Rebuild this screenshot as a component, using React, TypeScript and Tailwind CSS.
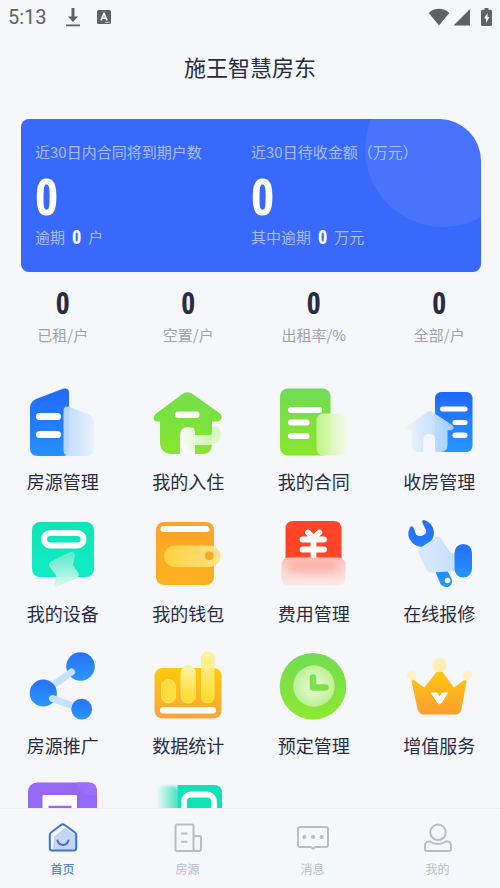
import type { ReactNode } from 'react';

const numberFont = "font-['Open_Sans_Condensed','Roboto_Condensed','Liberation_Sans',sans-serif] font-bold";

interface GradProps {
  id: string;
  from: string;
  to: string;
  fromOpacity?: number;
  toOpacity?: number;
  horizontal?: boolean;
}

function Grad({ id, from, to, fromOpacity = 1, toOpacity = 1, horizontal }: GradProps) {
  return (
    <linearGradient id={id} x1="0" y1="0" x2={horizontal ? '1' : '0'} y2={horizontal ? '0' : '1'}>
      <stop offset="0" stopColor={from} stopOpacity={fromOpacity} />
      <stop offset="1" stopColor={to} stopOpacity={toOpacity} />
    </linearGradient>
  );
}

function MenuIcon({ children }: { children: ReactNode }) {
  return (
    <svg viewBox="0 0 80 80" className="size-20" fill="none" aria-hidden="true">
      {children}
    </svg>
  );
}

const menu: { id: string; label?: string; icon: ReactNode }[] = [
  {
    id: 'estate',
    label: '房源管理',
    icon: (
      <>
        <defs>
          <Grad id="estate" from="#2068fb" to="#2390ff" />
          <Grad id="estateGlass" from="#b9d8fd" to="#e9f1fc" horizontal />
        </defs>
        <path d="M7 26q0-6 6-9L40 6.800q6-1.500 6 4V68q0 6-6 6H15q-8 0-8-8Z" fill="url(#estate)" />
        <rect x="13" y="31" width="25" height="7" rx="3.500" fill="#fff" />
        <rect x="13" y="49" width="25" height="7" rx="3.500" fill="#fff" />
        <path d="M40.500 29q0-6 6-4L66 32.500q5 2 5 8V66q0 8-8 8H47q-6.500 0-6.500-6Z" fill="url(#estateGlass)" fillOpacity=".95" />
      </>
    ),
  },
  {
    id: 'stay',
    label: '我的入住',
    icon: (
      <>
        <defs>
          <Grad id="stay" from="#72df4c" to="#8ae52f" />
          <Grad id="stayGlass" from="#f4fdea" to="#d3f6b8" toOpacity={0.85} horizontal />
        </defs>
        <path d="M34.500 12q5-3.500 10 0L72 31.500q3 2.500 1 6-1.500 2-4 2h-5V63q-1 9-9 9H24q-11 0-12-11V39.500H9q-3 0-3.500-3-.2-2.500 2-4.500Z" fill="url(#stay)" />
        <rect x="27" y="29.500" width="24.500" height="6.500" rx="3" fill="#fff" />
        <path d="M32 72.500V54q0-9 8-9 7 0 7 8v19.500Z" fill="#f8faf8" />
        <path d="M34 54.500 43 46q3-1.500 3.500 2v5H62q2 0 2-3v-5q7-2.500 8.500 5.500Q73.500 62 62 63H47v5q-1 2-3 .5L34 58.500q-2-2 0-4Z" fill="url(#stayGlass)" />
      </>
    ),
  },
  {
    id: 'contract',
    label: '我的合同',
    icon: (
      <>
        <defs>
          <Grad id="contract" from="#70db55" to="#8be52b" />
          <Grad id="contractGlass" from="#c5f58d" to="#f2fce9" horizontal />
        </defs>
        <rect x="6" y="6.500" width="50.500" height="67" rx="8" fill="url(#contract)" />
        <rect x="14" y="25" width="34" height="6" rx="3" fill="#fff" />
        <rect x="14" y="37.500" width="21.500" height="6" rx="3" fill="#fff" />
        <rect x="14" y="51" width="21.500" height="6" rx="3" fill="#fff" />
        <rect x="42.500" y="31.500" width="30.500" height="42" rx="7" fill="url(#contractGlass)" fillOpacity=".95" />
      </>
    ),
  },
  {
    id: 'collect',
    label: '收房管理',
    icon: (
      <>
        <defs>
          <Grad id="collect" from="#2067fb" to="#2797ff" />
          <Grad id="collectGlass" from="#edf4fd" to="#a6d3fc" horizontal />
        </defs>
        <rect x="36" y="10" width="37.500" height="60" rx="6" fill="url(#collect)" />
        <rect x="41" y="24.500" width="27.500" height="5" rx="2.500" fill="#fff" />
        <rect x="53.500" y="38" width="15" height="5" rx="2.500" fill="#fff" />
        <rect x="53.500" y="50.500" width="15" height="5.500" rx="2.700" fill="#fff" />
        <path d="M28.500 30q2.500-1.800 5 0L53 43q2.500 1.800 1 4-1 1.300-3 1.300h-2.500V63q0 7-7 7H36V57q0-5-5.800-5T24.300 57v13H20q-7.300 0-7.300-7V48.300H10q-3.500-.3-2.500-3.500Z" fill="url(#collectGlass)" fillOpacity=".95" />
      </>
    ),
  },
  {
    id: 'device',
    label: '我的设备',
    icon: (
      <>
        <defs>
          <Grad id="device" from="#10e4b5" to="#0fedc4" />
          <Grad id="deviceGlass" from="#5fe9c8" to="#d9faf1" />
        </defs>
        <rect x="9" y="8" width="62" height="55" rx="8" fill="url(#device)" />
        <rect x="21" y="19" width="39.500" height="12.500" rx="6.200" stroke="#fff" strokeWidth="6" />
        <path d="M47 38.800q4-1.600 4.500 2.500L49.500 51l5.500 8q1.500 3-1.500 4.500L32.500 72.500q-1.500.5-1-1L33.700 62l-7-9.500q-1.700-3 1.300-4.700Z" fill="url(#deviceGlass)" fillOpacity=".95" stroke="#a5f5df" strokeOpacity=".6" strokeWidth=".8" />
      </>
    ),
  },
  {
    id: 'wallet',
    label: '我的钱包',
    icon: (
      <>
        <defs>
          <Grad id="wallet" from="#fba32b" to="#ffb11d" />
          <Grad id="walletGlass" from="#ffd43a" to="#ffe38c" horizontal />
        </defs>
        <rect x="8" y="8" width="58" height="63" rx="8" fill="url(#wallet)" />
        <rect x="12.500" y="12" width="49" height="6" rx="3" fill="#fff" />
        <rect x="16" y="31.500" width="56.500" height="21.500" rx="10.700" fill="url(#walletGlass)" fillOpacity=".95" />
        <circle cx="61.300" cy="41.700" r="4.500" fill="#fdaa23" />
      </>
    ),
  },
  {
    id: 'fee',
    label: '费用管理',
    icon: (
      <>
        <defs>
          <Grad id="feeGlass" from="#fdc3bb" to="#fbe9e8" />
          <filter id="feeBlur" x="-20%" y="-60%" width="140%" height="220%">
            <feGaussianBlur stdDeviation="4" />
          </filter>
        </defs>
        <path d="M11.500 45V15q0-8 8-8h40q8 0 8 8v30Z" fill="#ff4428" />
        <path d="m34 18.500 5.500 5.500 5.800-5.500M28.500 25.500h21.500M28.500 35.500h21.500M39.500 25v20" stroke="#fff" strokeWidth="5.800" strokeLinecap="round" strokeLinejoin="round" />
        <rect x="7.500" y="43.500" width="64" height="28" rx="7" fill="url(#feeGlass)" />
        <rect x="15" y="47" width="49" height="11" rx="5" fill="#fc9f91" fillOpacity=".65" filter="url(#feeBlur)" />
      </>
    ),
  },
  {
    id: 'repair',
    label: '在线报修',
    icon: (
      <>
        <defs>
          <Grad id="repair" from="#236efa" to="#2595fd" />
          <Grad id="repairGlass" from="#dbeafd" to="#c4dffd" horizontal />
        </defs>
        <path d="M11 13.500q2-2.500 3.800.5L17 20.500q3 2.500 6.500 1 4.500-2 3.500-5.500L23.500 9q-1-3.500 2.500-2.800 8 3.300 9 11.800 0 5-2.500 9l20 37.500q2 5.500-2.500 8-5 2-8.500-2.500L26 33q-8 .5-12.500-4Q6.500 22 11 13.500Z" fill="url(#repair)" />
        <circle cx="48.500" cy="66.500" r="2.800" fill="#f4f7fc" />
        <path d="M20 34.500 38 23q2-1.200 3.500 1L51 38q1.500 1.500 4 1.500l4 .5v17l-27 1.500q-3.500 0-5-3.500l-8-17q-.5-2 1-3.500Z" fill="url(#repairGlass)" />
        <rect x="55.500" y="30" width="17.500" height="33.500" rx="8.700" fill="url(#repair)" />
      </>
    ),
  },
  {
    id: 'share',
    label: '房源推广',
    icon: (
      <>
        <defs>
          <Grad id="share" from="#2573fa" to="#2b96fd" />
        </defs>
        <circle cx="57.500" cy="20.500" r="14.300" fill="url(#share)" />
        <path d="M48.500 26 32.500 37.500" stroke="#c6e0fd" strokeWidth="7" strokeLinecap="round" />
        <circle cx="20.300" cy="47" r="13.600" fill="url(#share)" />
        <path d="M29.500 52.500 50 60" stroke="#c6e0fd" strokeWidth="7" strokeLinecap="round" />
        <circle cx="58.700" cy="63.200" r="10.400" fill="url(#share)" />
      </>
    ),
  },
  {
    id: 'stats',
    label: '数据统计',
    icon: (
      <>
        <defs>
          <Grad id="stats" from="#fdcb07" to="#faa53c" />
          <Grad id="statsBar" from="#fff3ab" to="#ffdb1f" />
        </defs>
        <rect x="6.500" y="22" width="67" height="50.500" rx="8" fill="url(#stats)" />
        <rect x="12" y="61" width="56" height="6.500" rx="3.200" fill="#fff" />
        <rect x="13.500" y="33.500" width="14" height="23.500" rx="7" fill="#ffde42" stroke="#ffea7e" strokeWidth=".8" />
        <rect x="33" y="20" width="14.500" height="37" rx="7" fill="url(#statsBar)" stroke="#ffea7e" strokeWidth=".8" />
        <rect x="53.500" y="6" width="12.500" height="51" rx="6" fill="url(#statsBar)" stroke="#ffea7e" strokeWidth=".8" />
      </>
    ),
  },
  {
    id: 'booking',
    label: '预定管理',
    icon: (
      <>
        <defs>
          <Grad id="booking" from="#72db53" to="#8ee931" />
          <radialGradient id="bookingFace">
            <stop offset="0" stopColor="#eafcd9" />
            <stop offset="1" stopColor="#bdf095" />
          </radialGradient>
        </defs>
        <circle cx="39" cy="40.300" r="33.300" fill="url(#booking)" />
        <circle cx="40" cy="40" r="20.700" fill="url(#bookingFace)" />
        <path d="M39 31.500v10h12.500" stroke="#7fdf48" strokeWidth="6.500" strokeLinecap="round" strokeLinejoin="round" />
      </>
    ),
  },
  {
    id: 'vip',
    label: '增值服务',
    icon: (
      <>
        <defs>
          <Grad id="vip" from="#ffc80c" to="#fb9f32" />
        </defs>
        <path d="M12.500 35q1-2 3-.5l9.800 7L37.500 26q3-3 6 0L55 41.500l9.500-7q2.500-1.300 3 1L62.500 63q-1 5.500-6.500 5.500H25q-5 0-6.500-5.500Z" fill="url(#vip)" />
        <path d="M32.500 47h5.500l2.500 4 2.700-4h5.300l-6 9.500q-2 2.500-4 0Z" fill="#fff" stroke="#fff" strokeLinejoin="round" />
        <circle cx="40.500" cy="19.300" r="7" fill="#ffeeb0" fillOpacity=".95" />
        <circle cx="12.500" cy="29.700" r="4.800" fill="#fff0c0" fillOpacity=".95" />
        <circle cx="68.500" cy="29.700" r="4.800" fill="#fff0c0" fillOpacity=".95" />
      </>
    ),
  },
  {
    id: 'document',
    icon: (
      <>
        <rect x="5" y="4.500" width="69" height="69" rx="9" fill="#9568f8" />
        <path d="M54 4.500a15 15 0 0 0 20 12V13q0-8.500-8.500-8.500Z" fill="#9b70f9" />
        <rect x="19.500" y="17" width="34.500" height="45" rx="1" fill="#fff" />
        <path d="M25.500 29h23M25.500 39h23" stroke="#9568f8" strokeWidth="2.500" />
      </>
    ),
  },
  {
    id: 'lock',
    icon: (
      <>
        <defs>
          <Grad id="lockGlass" from="#e9faf7" to="#3fe3c2" horizontal />
          <filter id="lockBlur" x="-20%" y="-20%" width="140%" height="140%">
            <feGaussianBlur stdDeviation="1.500" />
          </filter>
        </defs>
        <rect x="9" y="8" width="22" height="60" rx="6" fill="url(#lockGlass)" filter="url(#lockBlur)" />
        <path d="M29.500 7H66q8 0 8 8v55H29.500Z" fill="#10e2b7" />
        <rect x="36" y="16.500" width="30" height="44" rx="7" stroke="#fff" strokeWidth="5.800" />
      </>
    ),
  },
];

const summary = [
  { title: '近30日内合同将到期户数', value: 0, overdueLabel: '逾期', overdue: 0, unit: '户' },
  { title: '近30日待收金额（万元）', value: 0, overdueLabel: '其中逾期', overdue: 0, unit: '万元' },
];

const stats = [
  { value: 0, label: '已租/户' },
  { value: 0, label: '空置/户' },
  { value: 0, label: '出租率/%' },
  { value: 0, label: '全部/户' },
];

const tabs: { label: string; active?: boolean; icon: ReactNode }[] = [
  {
    label: '首页',
    active: true,
    icon: (
      <>
        <path d="M7 15.500 17.500 7 29 14v13q0 2.500-2.500 2.500H6Z" fill="#c3d5fb" stroke="none" />
        <path d="M14.300 3.800q1.500-1 3 0L28 11.500q1.200.9 1.200 2.500v13q0 2.500-2.500 2.500H5.300q-2.500 0-2.500-2.500V14q0-1.600 1.200-2.500Z" />
        <path d="M10.500 19.500q1.500 4.500 5.500 4.500t5.500-4.500" strokeLinecap="round" />
      </>
    ),
  },
  {
    label: '房源',
    icon: (
      <>
        <rect x="3.500" y="3.500" width="18" height="26.500" rx="1.500" />
        <path d="M21.500 15H27q2 0 2 2v11q0 2-2 2h-5.500M9 12.500h6.500M9 20.700h6.500" />
      </>
    ),
  },
  {
    label: '消息',
    icon: (
      <>
        <path d="M3 6h26q2 0 2 2v16q0 2-2 2H18.500L16 27.500 13.500 26H3q-2 0-2-2V8q0-2 2-2Z" />
        <path d="M7.300 16h.01M16 16h.01M24.600 16h.01" strokeWidth="4.200" strokeLinecap="round" />
      </>
    ),
  },
  {
    label: '我的',
    icon: (
      <>
        <circle cx="16" cy="11.300" r="7.700" />
        <path d="M8 20.500q8 5 16 0 5-.5 5 4.500v3q0 2-2 2H5q-2 0-2-2v-3q0-5 5-4.500Z" strokeLinejoin="round" />
      </>
    ),
  },
];

function StatusBar() {
  return (
    <div className="flex h-[34px] shrink-0 items-center justify-between pr-2 pl-2 text-[#606164]">
      <div className="flex items-center">
        <span className="font-['Roboto',sans-serif] text-xl leading-6">5:13</span>
        <svg viewBox="0 0 14 20" className="ml-[19px] h-5 w-3.5" fill="currentColor" aria-hidden="true">
          <path d="M5.500 1h3v8.500H12l-5 5.500-5-5.500h3.500ZM0 17.500h14v1.700H0Z" />
        </svg>
        <svg viewBox="0 0 14 14" className="ml-[17px] size-3.5" aria-hidden="true">
          <rect width="14" height="14" rx="1.500" fill="currentColor" />
          <path d="M4 10.300 7 3.500l3 6.800M5.200 8.200h3.600" stroke="#f5f7fb" strokeWidth="1.700" fill="none" />
          <path d="M8 12.300h4.500" stroke="#f5f7fb" strokeWidth=".8" />
        </svg>
      </div>
      <div className="flex items-center" aria-hidden="true">
        <svg viewBox="0 0 22 18" className="mr-[3px] h-[18px] w-[22px]" fill="currentColor">
          <path d="M11 17.500.700 5Q5.500.800 11 .800T21.300 5Z" />
        </svg>
        <svg viewBox="0 0 17 18" className="mr-[11px] h-[18px] w-[17px]" fill="currentColor">
          <path d="M17 1v16.500H.500Z" />
        </svg>
        <svg viewBox="0 0 11 20" className="h-5 w-[11px]" fill="currentColor">
          <path d="M3.500 1h4v1.700h2q1.500 0 1.500 1.500v13.300q0 1.500-1.500 1.500h-8Q0 19 0 17.500V4.200q0-1.500 1.500-1.500h2Z" />
          <path d="M6.500 6 3 11.500h2V16l3.500-6h-2Z" fill="#f5f7fb" />
        </svg>
      </div>
    </div>
  );
}

export default function App() {
  return (
    <div className="flex h-screen flex-col overflow-hidden bg-[#f5f7fb] font-['Noto_Sans_CJK_SC',sans-serif] text-[#282c42]">
      <StatusBar />
      <header className="flex h-[68px] shrink-0 items-center justify-center pb-1">
        <h1 className="text-[22px] leading-8">施王智慧房东</h1>
      </header>

      <main className="-mr-0.5 min-h-0 flex-1 overflow-y-auto pt-[17px] [scrollbar-width:none]">
        {/* Contract / payment summary */}
        <section className="relative mx-[21px] grid grid-cols-2 overflow-hidden rounded-lg rounded-tr-[42px] bg-[#3968fc] px-3.5 pt-[21px] pb-[23px]">
          <div className="absolute -top-12 -right-10 size-[156px] rounded-full bg-white/8" />
          {summary.map(item => (
            <div key={item.title} className="relative">
              <h2 className="text-[15px] leading-6 whitespace-nowrap text-[#a9beff]">{item.title}</h2>
              <p className={`${numberFont} mt-2 text-[50px] leading-12 text-white`}>{item.value}</p>
              <p className="mt-[5px] flex items-center text-[15px] leading-6 text-[#a9beff]">
                {item.overdueLabel}
                <span className={`${numberFont} mx-[7px] text-xl leading-6 text-white`}>{item.overdue}</span>
                {item.unit}
              </p>
            </div>
          ))}
        </section>

        <section className="grid grid-cols-4 pt-[15px] text-center">
          {stats.map(({ value, label }) => (
            <div key={label}>
              <p className={`${numberFont} text-3xl leading-8`}>{value}</p>
              <p className="mt-1 text-[15px] leading-6 text-[#a0a3a8]">{label}</p>
            </div>
          ))}
        </section>

        <section className="grid grid-cols-4 gap-y-[21px] pt-[35px] pb-5">
          {menu.map(({ id, label, icon }) => (
            <button key={id} type="button" className="flex flex-col items-center gap-[7px]">
              <MenuIcon>{icon}</MenuIcon>
              {label && <span className="text-lg leading-6">{label}</span>}
            </button>
          ))}
        </section>
      </main>

      <nav className="grid h-20 shrink-0 grid-cols-4 border-t border-[#eeeff2] bg-[#f6f7fa]">
        {tabs.map(({ label, active, icon }) => (
          <a
            key={label}
            href="#"
            aria-current={active ? 'page' : undefined}
            className={`flex flex-col items-center gap-2 pt-3 ${active ? 'text-[#3b70df]' : 'text-[#b9bec5]'}`}
          >
            <svg viewBox="0 0 32 32" className="size-8" fill="none" stroke="currentColor" strokeWidth="2" aria-hidden="true">
              {icon}
            </svg>
            <span className="text-xs leading-4">{label}</span>
          </a>
        ))}
      </nav>
    </div>
  );
}
